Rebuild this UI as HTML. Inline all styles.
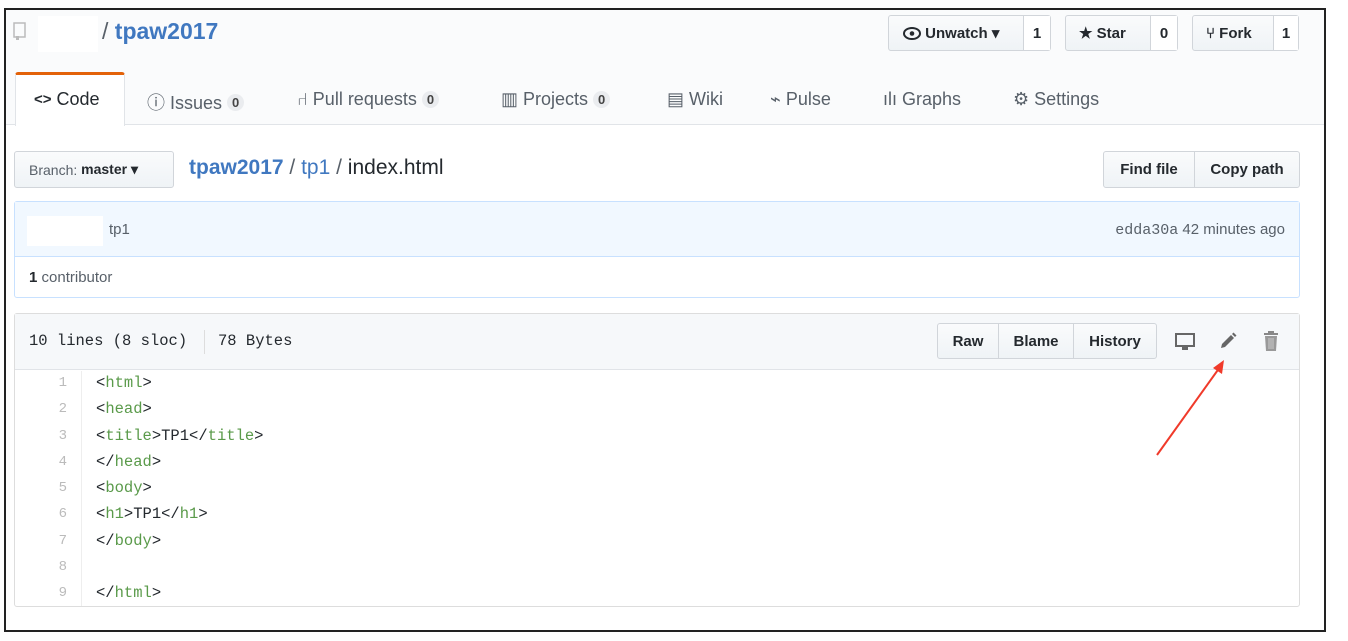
<!DOCTYPE html>
<html><head><meta charset="utf-8"><style>
*{box-sizing:border-box;margin:0;padding:0}
body{width:1348px;height:641px;background:#fff;font-family:"Liberation Sans",sans-serif;position:relative;overflow:hidden;color:#333}
.a{position:absolute}
.frame{left:4px;top:8px;width:1322px;height:624px;border:2px solid #222;border-left-width:2px}
.hdr{left:6px;top:10px;width:1318px;height:115px;background:#fafbfc;border-bottom:1px solid #e1e4e8}
.btn{position:absolute;border:1px solid #d1d5da;border-radius:3px;background:linear-gradient(#fafbfc,#eff3f6);font-weight:bold;font-size:15px;color:#24292e;display:flex;align-items:center}
.cnt{background:#fff;height:100%;display:flex;align-items:center;justify-content:center;border-left:1px solid #d1d5da;font-size:15px}
.tab{position:absolute;top:89px;font-size:18px;color:#586069;display:flex;align-items:center;gap:5px}
.ct{display:inline-block;background:#eaecef;border-radius:10px;font-size:13px;font-weight:bold;padding:1px 5px;color:#444}
.mono{font-family:"Liberation Mono",monospace}
.ln{position:absolute;left:20px;width:47px;text-align:right;color:#bbb;font-size:14px}
.cd{position:absolute;left:96px;font-size:15.5px;color:#24292e}
.g{color:#5a9a4a}
</style></head><body>
<div class="a frame"></div>
<div class="a hdr"></div>
<svg class="a" style="left:13px;top:22px" width="14" height="18" viewBox="0 0 14 18"><rect x="1" y="1" width="11" height="14" fill="none" stroke="#bbb" stroke-width="1.5"/><rect x="3" y="14" width="3" height="4" fill="#bbb"/></svg>
<div class="a" style="left:38px;top:16px;width:60px;height:36px;background:#fff"></div>
<div class="a" style="left:102px;top:18px;font-size:23px;color:#586069">/ <span style="color:#4078c0;font-weight:bold">tpaw2017</span></div>

<div class="btn" style="left:888px;top:15px;width:163px;height:36px"><span style="padding-left:14px;width:134px">
<svg width="18" height="13" viewBox="0 0 18 13" style="vertical-align:-2px"><ellipse cx="9" cy="6.5" rx="8" ry="5.5" fill="none" stroke="#24292e" stroke-width="2"/><circle cx="9" cy="6.5" r="2.3" fill="#24292e"/></svg> Unwatch ▾</span><span class="cnt" style="flex:1">1</span></div>
<div class="btn" style="left:1065px;top:15px;width:113px;height:36px"><span style="padding-left:13px;width:84px">★ Star</span><span class="cnt" style="flex:1">0</span></div>
<div class="btn" style="left:1192px;top:15px;width:107px;height:36px"><span style="padding-left:13px;width:80px">⑂ Fork</span><span class="cnt" style="flex:1">1</span></div>

<div class="a" style="left:15px;top:72px;width:110px;height:54px;background:#fff;border:1px solid #e1e4e8;border-bottom:none;border-top:3px solid #e36209;border-radius:3px 3px 0 0"></div>
<div class="tab" style="left:34px;color:#24292e;font-weight:normal"><b style="font-size:15px">&lt;&gt;</b> Code</div>
<div class="tab" style="left:147px">ⓘ Issues <span class="ct">0</span></div>
<div class="tab" style="left:297px">⑁ Pull requests <span class="ct">0</span></div>
<div class="tab" style="left:501px">▥ Projects <span class="ct">0</span></div>
<div class="tab" style="left:667px">▤ Wiki</div>
<div class="tab" style="left:770px">⌁ Pulse</div>
<div class="tab" style="left:883px">ılı Graphs</div>
<div class="tab" style="left:1013px">⚙ Settings</div>

<div class="btn" style="left:14px;top:151px;width:160px;height:37px;font-weight:normal;font-size:14px;color:#586069;padding-left:14px">Branch:&nbsp;<b style="color:#24292e">master ▾</b></div>
<div class="a" style="left:189px;top:156px;font-size:21px;color:#586069"><b style="color:#4078c0">tpaw2017</b> / <span style="color:#4078c0">tp1</span> / <span style="color:#24292e">index.html</span></div>
<div class="btn" style="left:1103px;top:151px;width:197px;height:37px;font-size:15px"><span style="width:90px;text-align:center">Find file</span><span style="flex:1;height:100%;border-left:1px solid #d1d5da;display:flex;align-items:center;justify-content:center">Copy path</span></div>

<div class="a" style="left:14px;top:201px;width:1286px;height:97px;border:1px solid #c8e1ff;border-radius:3px"></div>
<div class="a" style="left:15px;top:202px;width:1284px;height:55px;background:#f1f8ff;border-bottom:1px solid #c8e1ff"></div>
<div class="a" style="left:27px;top:216px;width:76px;height:30px;background:#fff"></div>
<div class="a" style="left:109px;top:221px;font-size:15px;color:#586069">tp1</div>
<div class="a" style="right:63px;top:221px;font-size:15px;color:#586069"><span class="mono" style="font-size:15px">edda30a</span> 42 minutes ago</div>
<div class="a" style="left:29px;top:269px;font-size:15px;color:#586069"><b style="color:#24292e">1</b> contributor</div>

<div class="a" style="left:14px;top:313px;width:1286px;height:294px;border:1px solid #ddd;border-radius:3px"></div>
<div class="a" style="left:15px;top:314px;width:1284px;height:56px;background:#f6f8fa;border-bottom:1px solid #e1e4e8"></div>
<div class="a mono" style="left:29px;top:332px;font-size:15.5px;color:#24292e">10 lines (8 sloc)</div>
<div class="a" style="left:204px;top:330px;width:1px;height:24px;background:#ddd"></div>
<div class="a mono" style="left:218px;top:332px;font-size:15.5px;color:#24292e">78 Bytes</div>
<div class="btn" style="left:937px;top:323px;width:220px;height:36px;font-size:15px"><span style="width:60px;text-align:center">Raw</span><span style="width:75px;height:100%;border-left:1px solid #d1d5da;display:flex;align-items:center;justify-content:center">Blame</span><span style="flex:1;height:100%;border-left:1px solid #d1d5da;display:flex;align-items:center;justify-content:center">History</span></div>
<svg class="a" style="left:1174px;top:332px" width="22" height="20" viewBox="0 0 22 20"><rect x="2" y="2" width="18" height="12" fill="none" stroke="#666" stroke-width="2"/><rect x="8" y="15" width="6" height="3" fill="#666"/></svg>
<svg class="a" style="left:1218px;top:331px" width="20" height="20" viewBox="0 0 20 20"><path d="M3 17 L4 13 L13 4 L16 7 L7 16 Z" fill="#666"/><path d="M14 3 L15.5 1.5 L18.5 4.5 L17 6Z" fill="#666"/></svg>
<svg class="a" style="left:1262px;top:330px" width="18" height="22" viewBox="0 0 18 22"><rect x="2" y="3" width="14" height="2" fill="#888"/><rect x="6" y="1" width="6" height="2" fill="#888"/><path d="M3 6h12l-1 15H4z" fill="#999"/><path d="M7 8v11M9 8v11M11 8v11" stroke="#ccc"/></svg>

<div class="a" style="left:81px;top:371px;width:1px;height:235px;background:#eee"></div>
<div class="mono">
<div class="ln" style="top:375px">1</div><div class="cd" style="top:374px">&lt;<span class="g">html</span>&gt;</div>
<div class="ln" style="top:401px">2</div><div class="cd" style="top:400px">&lt;<span class="g">head</span>&gt;</div>
<div class="ln" style="top:428px">3</div><div class="cd" style="top:427px">&lt;<span class="g">title</span>&gt;TP1&lt;/<span class="g">title</span>&gt;</div>
<div class="ln" style="top:454px">4</div><div class="cd" style="top:453px">&lt;/<span class="g">head</span>&gt;</div>
<div class="ln" style="top:480px">5</div><div class="cd" style="top:479px">&lt;<span class="g">body</span>&gt;</div>
<div class="ln" style="top:506px">6</div><div class="cd" style="top:505px">&lt;<span class="g">h1</span>&gt;TP1&lt;/<span class="g">h1</span>&gt;</div>
<div class="ln" style="top:533px">7</div><div class="cd" style="top:532px">&lt;/<span class="g">body</span>&gt;</div>
<div class="ln" style="top:559px">8</div>
<div class="ln" style="top:585px">9</div><div class="cd" style="top:584px">&lt;/<span class="g">html</span>&gt;</div>
</div>

<svg class="a" style="left:1150px;top:355px" width="80" height="105" viewBox="0 0 80 105"><line x1="7" y1="100" x2="70" y2="12" stroke="#f03a2a" stroke-width="2"/><path d="M74 5 L63 13 L72 19 Z" fill="#f03a2a"/></svg>
</body></html>
